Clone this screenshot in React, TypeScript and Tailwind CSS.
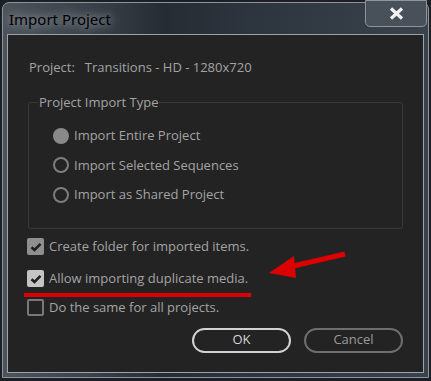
import * as React from "react";

const FONT = { fontFamily: '"Open Sans", "Noto Sans", sans-serif' };

function Radio({ checked }: { checked?: boolean }) {
  return checked ? (
    <span className="w-[16px] h-[16px] rounded-full bg-[#8a8a8a] shrink-0" />
  ) : (
    <span className="w-[16px] h-[16px] rounded-full border-2 border-[#7d7d7d] shrink-0" />
  );
}

function Check({ checked, light }: { checked?: boolean; light?: boolean }) {
  if (!checked) {
    return <span className="w-[17px] h-[17px] rounded-[2px] border-2 border-[#787878] shrink-0" />;
  }
  return (
    <span
      className={
        "w-[17px] h-[17px] rounded-[2px] shrink-0 flex items-center justify-center " +
        (light ? "bg-[#c4c4c4]" : "bg-[#8f8f8f]")
      }
    >
      <svg width="12" height="10" viewBox="0 0 12 10">
        <path d="M1.5 5.2 L4.5 8 L10.5 1.8" fill="none" stroke="#1e1e1e" strokeWidth="2.6" />
      </svg>
    </span>
  );
}

export default function App() {
  return (
    <div className="w-[431px] h-[381px] bg-[#1c2024] pt-[2px] pl-[2px]" style={FONT}>
      <div className="relative w-[427px] h-[376px] rounded-t-[7px] border border-[#8e949a] bg-[linear-gradient(90deg,#4c535b_0%,#3a424b_20%,#262c33_38%,#2d353f_60%,#3a424c_100%)]">
        {/* title bar */}
        <div className="h-[31px] flex items-center pl-[6px] pt-[2px]">
          <span
            className="text-[15px] text-black"
            style={{ fontFamily: '"Noto Sans", "Open Sans", sans-serif', textShadow: "0 0 8px #9aa0a8, 0 0 12px #8a9098" }}
          >
            Import Project
          </span>
        </div>
        <div className="absolute top-[-3px] right-[1px] w-[62px] h-[27px] rounded-b-[5px] border border-[#8e949a] bg-[#48505a] flex items-center justify-center">
          <svg width="15" height="13" viewBox="0 0 15 13">
            <path d="M2 1.5 L13 11.5 M13 1.5 L2 11.5" stroke="#f2f2f2" strokeWidth="3.2" />
          </svg>
        </div>

        {/* content */}
        <div className="relative mx-[4px] h-[339px] border border-[#9ba3ab] bg-[#232323] text-[#a3a3a3] text-[13px]">
          <div className="pl-[21px] pt-[23px] flex gap-[10px]">
            <span>Project:</span>
            <span>Transitions - HD - 1280x720</span>
          </div>

          <fieldset className="ml-[20px] mr-[20px] mt-[15px] h-[136px] border border-[#393939] rounded-[3px] px-[10px]">
            <legend className="px-[1px] text-[13px] ml-[-1px]">Project Import Type</legend>
            <div className="flex flex-col gap-[10px] pl-[14px] pt-[14px]">
              <div className="flex items-center gap-[5px]">
                <Radio checked />
                <span>Import Entire Project</span>
              </div>
              <div className="flex items-center gap-[5px]">
                <Radio />
                <span>Import Selected Sequences</span>
              </div>
              <div className="flex items-center gap-[5px]">
                <Radio />
                <span>Import as Shared Project</span>
              </div>
            </div>
          </fieldset>

          <div className="pl-[19px] pt-[8px] flex flex-col">
            <div className="flex items-center gap-[5px] h-[20px]">
              <Check checked />
              <span>Create folder for imported items.</span>
            </div>
            <div className="flex items-center gap-[5px] h-[20px] mt-[12px]">
              <Check checked light />
              <span>Allow importing duplicate media.</span>
            </div>
            <div className="ml-[-3px] mt-[4px] w-[227px] h-[4px] bg-[#dd0000]" />
            <div className="flex items-center gap-[5px] h-[20px] mt-[1px]">
              <Check />
              <span>Do the same for all projects.</span>
            </div>
          </div>

          <div className="flex justify-end gap-[13px] pr-[20px] mt-[10px]">
            <button className="w-[99px] h-[25px] rounded-full border-2 border-[#d2d2d2] text-[#d6d6d6] text-[13px]">
              OK
            </button>
            <button className="w-[99px] h-[25px] rounded-full border-2 border-[#6e6e6e] text-[#9a9a9a] text-[13px]">
              Cancel
            </button>
          </div>

          {/* annotation arrow */}
          <svg className="absolute left-[259px] top-[215px]" width="80" height="30" viewBox="0 0 80 30">
            <path d="M78 4 L22 17" stroke="#dd0000" strokeWidth="5" />
            <path d="M2 23 L27 6 L29 28 Z" fill="#dd0000" />
          </svg>
        </div>
      </div>
    </div>
  );
}
